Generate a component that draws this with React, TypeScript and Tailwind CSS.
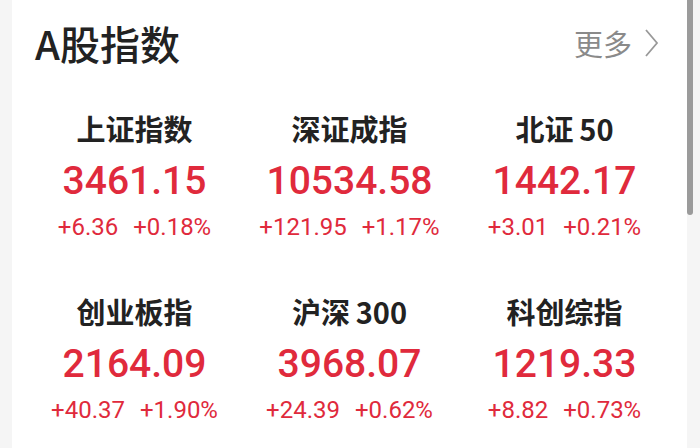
const indices = [
  { name: '上证指数', value: '3461.15', change: '+6.36', pct: '+0.18%' },
  { name: '深证成指', value: '10534.58', change: '+121.95', pct: '+1.17%' },
  { name: '北证\u200950', value: '1442.17', change: '+3.01', pct: '+0.21%' },
  { name: '创业板指', value: '2164.09', change: '+40.37', pct: '+1.90%' },
  { name: '沪深\u2009300', value: '3968.07', change: '+24.39', pct: '+0.62%' },
  { name: '科创综指', value: '1219.33', change: '+8.82', pct: '+0.73%' },
];

const cjk = "font-['Noto_Sans_CJK_SC','Noto_Sans',sans-serif]";
const num = "font-['Roboto','Noto_Sans',sans-serif]";

function IndexCell({ name, value, change, pct }: (typeof indices)[number]) {
  return (
    <div className="flex flex-col items-center">
      <div className={`${cjk} h-[40px] text-[29px] leading-[40px] font-semibold text-[#222]`}>{name}</div>
      <div className={`${num} mt-[10px] h-[46px] text-[39px] leading-[46px] font-medium text-[#e02a3c]`}>
        {value}
      </div>
      <div className={`${num} mt-[9px] flex gap-[15px] text-[24px] leading-[28px] text-[#e02a3c]`}>
        <span>{change}</span>
        <span>{pct}</span>
      </div>
    </div>
  );
}

export default function App() {
  return (
    <div className="flex h-[448px] w-[700px] overflow-hidden bg-[#f5f5f5]">
      <div className="ml-[12px] w-[675px] bg-white">
        {/* header */}
        <div className="flex items-center justify-between pl-[23px] pr-[28px] pt-[18px]">
          <h1 className={`${cjk} text-[40px] leading-[50px] font-medium text-[#222]`}>A股指数</h1>
          <div className="flex items-center gap-[12px]">
            <span className={`${cjk} text-[29px] leading-[40px] text-[#8a8a8a]`}>更多</span>
            <svg width="15" height="28" viewBox="0 0 15 28" fill="none">
              <polyline points="2,1 13,14 2,27" stroke="#999" strokeWidth="1.8" />
            </svg>
          </div>
        </div>

        {/* grid */}
        <div className="mt-[40px] grid grid-cols-3 gap-y-[50px] px-[15px]">
          {indices.map((i) => (
            <IndexCell key={i.name} {...i} />
          ))}
        </div>
      </div>
      <div className="relative flex-1">
        <div className="absolute left-[0px] top-0 h-[215px] w-[6px] rounded-b-full bg-[#9b9b9b]" />
      </div>
    </div>
  );
}
